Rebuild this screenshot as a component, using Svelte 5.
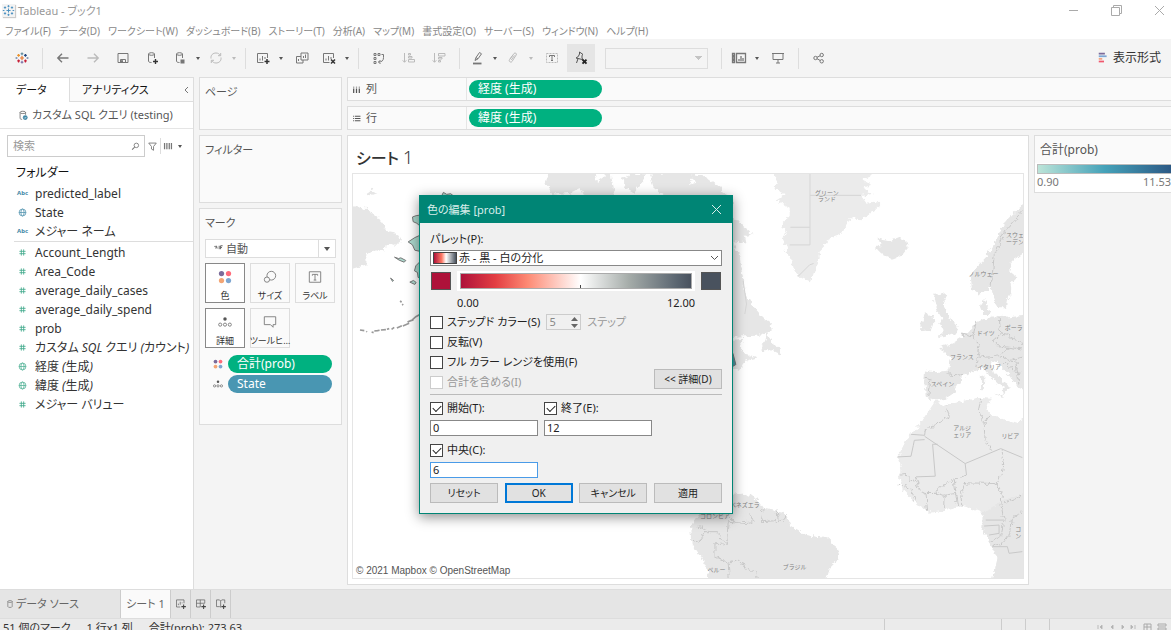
<script lang="ts">
  type Field = { icon: string; name: string; italic?: boolean };
  type Tool = { icon: string; label: string; caret?: boolean; off?: boolean; active?: boolean };

  const menus = ['ファイル(F)', 'データ(D)', 'ワークシート(W)', 'ダッシュボード(B)', 'ストーリー(T)', '分析(A)', 'マップ(M)', '書式設定(O)', 'サーバー(S)', 'ウィンドウ(N)', 'ヘルプ(H)'];

  const dimensions: Field[] = [
    { icon: 'abc', name: 'predicted_label' },
    { icon: 'globe', name: 'State' },
    { icon: 'abc', name: 'メジャー ネーム' },
  ];

  const measures: Field[] = [
    { icon: 'hash', name: 'Account_Length' },
    { icon: 'hash', name: 'Area_Code' },
    { icon: 'hash', name: 'average_daily_cases' },
    { icon: 'hash', name: 'average_daily_spend' },
    { icon: 'hash', name: 'prob' },
    { icon: 'hash', name: 'カスタム SQL クエリ (カウント)', italic: true },
    { icon: 'globe', name: '経度 (生成)', italic: true },
    { icon: 'globe', name: '緯度 (生成)', italic: true },
    { icon: 'hash', name: 'メジャー バリュー' },
  ];

  const toolGroups: Tool[][] = [
    [{ icon: 'logo', label: 'スタート' }],
    [
      { icon: 'back', label: '元に戻す' },
      { icon: 'forward', label: 'やり直し', off: true },
      { icon: 'save', label: '保存' },
      { icon: 'addData', label: '新しいデータ ソース' },
      { icon: 'pause', label: '自動更新の一時停止', caret: true },
      { icon: 'refresh', label: '更新の実行', caret: true, off: true },
    ],
    [
      { icon: 'newSheet', label: '新しいワークシート', caret: true },
      { icon: 'duplicate', label: '複製' },
      { icon: 'clear', label: 'クリア', caret: true },
    ],
    [
      { icon: 'swap', label: '行と列の交換' },
      { icon: 'sortAsc', label: '昇順で並べ替え', off: true },
      { icon: 'sortDesc', label: '降順で並べ替え', off: true },
    ],
    [
      { icon: 'pen', label: '強調表示', caret: true },
      { icon: 'clip', label: 'グループ化', caret: true, off: true },
      { icon: 'text', label: 'マーク ラベルの表示', off: true },
      { icon: 'pin', label: '軸の修正', active: true },
    ],
  ];

  // inner markup of the 16x16 icons
  const icons: Record<string, string> = {
    logo: `<g stroke-width="1.500" transform="translate(1.600 1.600) scale(.8)"><path stroke="#e8762d" d="M8 5.500v5M5.500 8h5"/><path stroke="#5b879b" d="M8 1v3.500M6.300 2.700h3.400"/><path stroke="#c72037" d="M3.700 10v3.500M2 11.700h3.500M12.300 10v3.500M10.600 11.700H14"/><path stroke="#1f447e" d="M12.300 3v3.500M10.600 4.700H14M13.800 8h2.200M0 8h2.200"/><path stroke="#eb9129" d="M3.700 3v3.500M2 4.700h3.500"/><path stroke="#7a6fa6" d="M8 11.500V15M6.300 13.300h3.400"/></g>`,
    app: `<g stroke="#4a90c0" stroke-width="1.2"><path d="M8 5.500v5M5.500 8h5M8 1.500v2.500M6.700 2.700h2.600M8 12v2.500M6.700 13.300h2.600M3.700 3v2.800M2.300 4.400h2.800M12.300 3v2.800M10.900 4.400h2.800M3.700 10.200V13M2.300 11.600h2.800M12.300 10.200V13M10.900 11.600h2.800M1 8h2M13 8h2"/></g>`,
    back: `<path d="M13.500 8H3M7 3.800 2.800 8 7 12.200" stroke-width="1.400"/>`,
    forward: `<path d="M2.500 8H13M9 3.800 13.200 8 9 12.200" stroke-width="1.400"/>`,
    save: `<path d="M3 3.500h10v9H3zM5.500 12.500v-3h5v3"/><path d="M6.500 10.500h1v2h-1z" fill="currentColor"/>`,
    addData: `<ellipse cx="6.500" cy="4" rx="3" ry="1.300"/><path d="M3.500 4v7c0 1 1 1.500 3 1.500M9.500 4v4"/><path d="M10.500 9v5M8 11.500h5" stroke="#333" stroke-width="1.400"/>`,
    pause: `<ellipse cx="7.500" cy="4" rx="3" ry="1.300"/><path d="M4.500 4v7c0 1 1 1.500 3 1.500M10.500 4v4"/><path d="M8.500 9.500h4v4h-4z" fill="currentColor" stroke="none"/>`,
    refresh: `<path d="M3 8.500C2.500 5 5 3 8 3c2 0 3.500 1 4.300 2.500M13 7.500c.5 3.500-2 5.500-5 5.500-2 0-3.500-1-4.300-2.500M12.700 3v2.700H10M3.300 13v-2.700H6"/>`,
    newSheet: `<path d="M12.500 8V3.500h-10v9h6M5 10.500v-2M7.500 10.500V6M10 9V7"/><path d="M12 9v5M9.500 11.500h5" stroke="#333" stroke-width="1.500"/>`,
    duplicate: `<path d="M7 3h7v7H7zM7 6.500H2.500V13H9v-3M9.500 8V6M11.500 8V4.500M4.500 11V9"/>`,
    clear: `<path d="M12.500 8V3.500h-10v9h6M5 10.500v-2M7.500 10.500V6M10 9V7"/><path d="m10 9.500 4 4M14 9.500l-4 4" stroke="#333" stroke-width="1.500"/>`,
    swap: `<path d="M3 3.500h2v2H3zM7 3.500h2v2H7zM3 7.500h2v2H3zM3 11.500h2v2H3z"/><path d="M10.500 4.500h2v3M12.500 7.500c0 3-1.500 4.500-5 4.500M9.500 10l-2 2 2 2"/>`,
    sortAsc: `<path d="M3.500 3v9M1.700 10.300l1.800 2 1.800-2M7.500 3.500h2v1.500h-2zM7.500 6.500h3.500v1.500H7.500zM7.500 9.500h6v2.500h-6z"/>`,
    sortDesc: `<path d="M3.500 3v9M1.700 10.300l1.800 2 1.800-2M7.500 3.500h6.500V6H7.500zM7.500 7.500H11v1.500H7.500zM7.500 10.500h2V12h-2z"/>`,
    pen: `<path d="m6 10.500 1-3 3.500-5 2 1.300-3.500 5zM7 7.500l2 1.300"/><path d="M4 13.500h8.500" stroke-width="1.800"/>`,
    clip: `<path d="m5 9 4-5.500c1-1.300 3.200 0 2.200 1.500L7 11.500c-1 1.500-3.700 0-2.500-1.800L8 5M9.500 5.500 6.300 10"/>`,
    text: `<path d="M2.500 3.500h11v9h-11z" stroke-dasharray="2 1"/><path d="M5.500 7V5.500h5V7M8 5.500v5M7 10.500h2" stroke="#777"/>`,
    pin: `<path d="m6.500 2 3.500 2.500-1 .8V8l1 1.700L3 8l2.300-1.500L6.500 4zM5 8.700 3.500 13"/><path d="m9.500 9.700 4 4M13.500 9.700l-4 4" stroke="#222" stroke-width="1.900"/>`,
    cards: `<path d="M1.500 3.500h2v2h-2zM1.500 7h2v2h-2zM1.500 10.500h2v2h-2zM5.500 3.500h9v9h-9zM8 11V9M10 11V6M12 11V8" stroke-width="1.300"/>`,
    present: `<path d="M2 3.500h12M3 3.500v6h10v-6M8 9.500V13M6 13h4"/>`,
    share: `<circle cx="4.500" cy="8" r="1.700"/><circle cx="10.700" cy="5" r="1.700"/><circle cx="10.700" cy="11.300" r="1.700"/><path d="m6 7.300 3-1.500M6 8.700l3 1.700"/>`,
    showMe: `<g stroke-width="2"><path stroke="#7b6b9a" d="M2 3h7"/><path stroke="#7ea6d4" d="M2 6h9"/><path stroke="#f3a582" d="M2 9h4"/><path stroke="#f0586e" d="M2 12h6"/></g>`,
    globe: `<circle cx="8" cy="8" r="5"/><ellipse cx="8" cy="8" rx="2.300" ry="5"/><path d="M3 8h10"/>`,
    hash: `<path d="M6.300 3.500v9M9.700 3.500v9M3.500 6.300h9M3.500 9.700h9" stroke-width="1.200"/>`,
    dataSource: `<ellipse cx="7" cy="3.500" rx="4" ry="1.700"/><path d="M3 3.500V12c0 1 1 1.500 3 1.700M11 3.500V7"/><circle cx="10.500" cy="11" r="3.500" fill="#3f87a6" stroke="none"/><path d="m9 11 1.200 1.200L12.200 10" stroke="#fff"/>`,
    database: `<ellipse cx="8" cy="4" rx="3.500" ry="1.500"/><path d="M4.500 4v8c0 2 7 2 7 0V4"/>`,
    search: `<circle cx="9.500" cy="6" r="4" stroke-width="1.500"/><path d="m6.500 9-4.500 4.500" stroke-width="1.800"/>`,
    filter: `<path d="M2.500 3h11L9.500 8v5.500l-3-1.800V8z" stroke-width="1.300"/>`,
    columns: `<path d="M3 3v1.500M3 6v8M8 3v1.500M8 6v8M13 3v1.500M13 6v8" stroke-width="2.200"/>`,
    rows: `<path d="M2 4h1.500M5 4h10M2 8h1.500M5 8h10M2 12h1.500M5 12h10" stroke-width="2"/>`,
    view: `<path d="M2.500 3v10M6.200 3v10M10 3v10M13.500 3v10" stroke-width="2"/>`,
    colors: `<g stroke="none"><circle cx="4" cy="4" r="3" fill="#7b6b9a"/><circle cx="12" cy="4" r="3" fill="#ff6b7a"/><circle cx="4" cy="12" r="3" fill="#f3a574"/><circle cx="12" cy="12" r="3" fill="#7ea6d0"/></g>`,
    size: `<circle cx="9.500" cy="6.500" r="5"/><circle cx="4.500" cy="11" r="3" fill="#fafafa"/>`,
    label: `<path d="M1.500 2h13v12h-13z"/><path d="M5 6.500V5h6v1.500M8 5v6.500M6.500 11.500h3"/>`,
    detail: `<circle cx="8" cy="4.500" r="2" fill="#555" stroke="none"/><circle cx="2.500" cy="11" r="1.800"/><circle cx="8" cy="11" r="1.800"/><circle cx="13.500" cy="11" r="1.800"/>`,
    tooltip: `<path d="M1.500 2h13v9h-3v3l-3-3h-7z"/>`,
    auto: `<path d="M2 5c2-1 3 1 2 3M5 4l1 4M9 4v5M11 4h3M11 6.500h2M11 4v5" stroke-width="1.300"/>`,
    tabSheet: `<path d="M12 7V2.500H2V12h5M4.500 9.500V7.500M7 9V5M9.500 7V6"/><path d="M11.500 8.500v6M8.500 11.500h6" stroke="#444" stroke-width="1.400"/>`,
    tabDashboard: `<path d="M13 7V2.500H2V12h5M2 7h11M7 2.500V12"/><path d="M11.500 8.500v6M8.500 11.500h6" stroke="#444" stroke-width="1.400"/>`,
    tabStory: `<path d="M13 7V2.500H9L7.500 4 6 2.500H2v9h4l1.500 1M7.500 4v8"/><path d="M11.500 8.500v6M8.500 11.500h6" stroke="#444" stroke-width="1.400"/>`,
  };

  const markCards = [
    { icon: 'colors', label: '色', used: true },
    { icon: 'size', label: 'サイズ', used: false },
    { icon: 'label', label: 'ラベル', used: false },
    { icon: 'detail', label: '詳細', used: true },
    { icon: 'tooltip', label: 'ツールヒ…', used: false },
  ];

  const mapLabels: [number, number, string][] = [
    [412, 101, 'グリーン'], [412, 121, 'ランド'], [978, 229, 'スウェ'], [978, 249, 'ーデン'],
    [883, 347, 'ノルウェー'], [890, 524, 'ドイツ'], [974, 507, 'ポーラ'], [818, 595, 'フランス'],
    [900, 626, 'イタリア'], [760, 676, 'スペイン'], [819, 808, 'アルジ'], [819, 831, 'ェリア'],
    [964, 834, 'リビア'], [165, 1042, 'ベネズエラ'], [75, 1074, 'コロンビア'],
    [315, 1226, 'ブラジル'], [80, 1235, 'ペルー'], [988, 1114, 'コ'], [988, 1135, 'ン'],
  ];

  let stepped = $state(false);
  let reversed = $state(false);
  let fullRange = $state(false);
  let useStart = $state(true);
  let useEnd = $state(true);
  let useCenter = $state(true);
  let start = $state('0');
  let end = $state('12');
  let center = $state('6');
</script>

{#snippet icon(name: string, size = 16)}
  <svg class="icon" width={size} height={size} viewBox="0 0 16 16" fill="none" stroke="currentColor" aria-hidden="true">
    {@html icons[name]}
  </svg>
{/snippet}

{#snippet tool(t: Tool)}
  <button class="tool" class:has-caret={t.caret} class:off={t.off} class:active={t.active} aria-label={t.label}>
    <span class="tool-icon">{@render icon(t.icon)}</span>
    {#if t.caret}<span class="caret"></span>{/if}
  </button>
{/snippet}

{#snippet field(f: Field)}
  <li class="field" class:italic={f.italic}>
    <span class="field-icon">
      {#if f.icon === 'abc'}<b>Abc</b>{:else}{@render icon(f.icon, 11)}{/if}
    </span>
    {f.name}
  </li>
{/snippet}

<div class="app">
  <header class="titlebar">
    <span class="app-icon">{@render icon('app', 13)}</span>
    <span class="app-title">Tableau - ブック1</span>
    <div class="window-buttons">
      <button aria-label="最小化"><svg width="11" height="11" viewBox="0 0 11 11"><path d="M1 5.500h9" /></svg></button>
      <button aria-label="元のサイズに戻す"><svg width="11" height="11" viewBox="0 0 11 11"><path d="M.5 2.500h8v8h-8zM2.500 2.500v-2h8v8h-2" /></svg></button>
      <button aria-label="閉じる"><svg width="11" height="11" viewBox="0 0 11 11"><path d="m1 1 9 9M10 1l-9 9" /></svg></button>
    </div>
  </header>

  <nav class="menubar">
    {#each menus as m}
      <button>{m}</button>
    {/each}
  </nav>

  <div class="toolbar">
    {#each toolGroups as group, i}
      {#if i > 0}<span class="sep"></span>{/if}
      {#each group as t}{@render tool(t)}{/each}
    {/each}
    <select class="fit" aria-label="フィット"><option></option></select>
    <span class="sep"></span>
    {@render tool({ icon: 'cards', label: 'カードの表示', caret: true })}
    {@render tool({ icon: 'present', label: 'プレゼンテーション モード' })}
    <span class="sep"></span>
    {@render tool({ icon: 'share', label: '共有' })}
    <button class="show-me">{@render icon('showMe', 14)}表示形式</button>
  </div>

  <div class="workspace">
    <aside class="data-pane">
      <div class="pane-tabs">
        <button class="pane-tab selected">データ</button>
        <button class="pane-tab">アナリティクス <svg width="5" height="8" viewBox="0 0 5 8"><path d="M4 1 1 4l3 3" /></svg></button>
      </div>
      <div class="source">{@render icon('dataSource', 11)}カスタム SQL クエリ (testing)</div>
      <div class="search-row">
        <div class="search">
          <input type="text" placeholder="検索" aria-label="検索" />
          {@render icon('search', 9)}
        </div>
        <button aria-label="フィルター">{@render icon('filter', 11)}</button>
        <span class="search-sep"></span>
        <button aria-label="表示">{@render icon('view', 10)}<span class="caret"></span></button>
      </div>
      <div class="folder">フォルダー</div>
      <ul class="fields">
        {#each dimensions as f}{@render field(f)}{/each}
      </ul>
      <ul class="fields measures">
        {#each measures as f}{@render field(f)}{/each}
      </ul>
    </aside>

    <div class="cards">
      <section class="card pages">ページ</section>
      <section class="card filters">フィルター</section>
      <section class="card marks">
        <div>マーク</div>
        <div class="mark-type">
          {@render icon('auto', 11)}
          <select aria-label="マークの種類"><option>自動</option></select>
          <span class="drop"><span class="caret"></span></span>
        </div>
        <div class="mark-buttons">
          {#each markCards as c}
            <button class:used={c.used}>{@render icon(c.icon, 14)}<span>{c.label}</span></button>
          {/each}
        </div>
        <div class="mark-pill">{@render icon('colors', 10)}<span class="pill">合計(prob)</span></div>
        <div class="mark-pill">{@render icon('detail', 10)}<span class="pill blue">State</span></div>
      </section>
    </div>

    <main class="view">
      <div class="shelf">
        <div class="shelf-label">{@render icon('columns', 9)}列</div>
        <span class="pill">経度 (生成)</span>
      </div>
      <div class="shelf">
        <div class="shelf-label">{@render icon('rows', 9)}行</div>
        <span class="pill">緯度 (生成)</span>
      </div>
      <div class="view-row">
        <section class="sheet">
          <h1>シート <span>1</span></h1>
          <div class="map">
            <svg viewBox="352 172 672 407" preserveAspectRatio="xMidYMid slice" role="img" aria-label="地図">
              <defs>
                <filter id="coast" x="-5%" y="-5%" width="110%" height="110%">
                  <feTurbulence type="fractalNoise" baseFrequency=".07" numOctaves="3" seed="4" />
                  <feDisplacementMap in="SourceGraphic" scale="20" xChannelSelector="R" yChannelSelector="G" />
                </filter>
              </defs>
              <g transform="translate(340 160) scale(.33333)">
                <g filter="url(#coast)">
                  <path class="land" d="M30 133 75 145 110 170 140 210 165 215 183 240 165 255 135 250 130 270 105 262 75 285 78 310 30 325ZM72 100 90 86 110 96 85 106Z" />
                  <path class="land" d="M625 30H765L770 60 810 30 825 110H735L720 80 690 95 640 100 615 70ZM845 50 880 38 920 40 900 70 880 95 855 80ZM930 38 1010 30 1060 38 1050 70 1090 60 1110 80 1140 90 1180 110V140H960L970 100 940 80Z" />
                </g>
                <path class="state" d="M300 110 308 94 318 100 330 98 345 110ZM240 162 226 164 215 168 217 182 228 187 240 197ZM240 222 222 230 202 243 215 252 222 268 240 272ZM161 289 173 293 180 291 195 299 190 304 175 298ZM240 300 225 315 221 330 230 335 232 350 240 352ZM207 364 218 359 226 365 222 371ZM149 352 158 359 155 362Z" />
                <path class="isles" d="M57 508 70 510 M76 512 78 514 M92 514 98 516 M100 511 110 510 116 509 M120 508 135 507 M138 506 145 504 M152 506 160 500 M168 502 183 495 M186 496 205 488 M200 484 210 480 218 478 M212 480 225 468 240 460M178 420l4 5M184 430l3 3" />
              </g>
              <g transform="translate(690 160) scale(.33333)">
                <g filter="url(#coast)">
                  <path class="land light" d="M248 30 262 62 255 85 288 100 260 118 300 140 300 165 275 190 288 215 278 235 292 262 285 275 303 290 308 320 325 345 362 362 372 335 385 300 390 270 410 250 420 232 450 222 470 195 480 172 520 175 545 155 572 135 572 120 530 125 515 105 550 98 520 80 545 70 515 55 575 30Z" />
                  <path class="land" d="M558 232 580 250 560 262 578 280 608 294 640 282 655 262 650 235 630 228 600 240 580 238ZM0 38 40 45 90 80 115 115 130 165 150 190 188 220 165 225 170 248 100 235ZM100 230 128 240 150 290 160 360 165 395 185 430 215 465 245 490 240 515 215 525 100 530ZM100 540 160 535 150 560 165 580 205 590 170 600 150 628 100 615ZM232 512 245 545 270 560 272 582 245 570 215 568 225 545Z" />
                  <path class="land" d="M1010 125 980 150 950 180 930 220 915 250 890 290 860 320 845 345 848 385 870 402 895 390 905 375 915 410 925 440 950 440 955 415 968 400 965 370 985 350 960 330 970 300 1010 270ZM880 415 897 420 895 445 905 460 880 460 872 440ZM740 402 765 395 770 420 765 440 785 475 805 500 800 518 745 530 765 510 750 490 760 470 745 450 735 420ZM697 485 710 458 730 465 732 490 725 508 695 512Z" />
                  <path class="land" d="M1010 465 960 470 930 462 890 475 862 485 845 505 820 530 790 548 750 560 765 575 785 590 780 630 735 635 707 630 705 665 710 708 740 720 770 715 790 700 800 680 820 655 826 640 860 630 880 620 895 640 920 660 940 680 945 705 915 700 940 713 955 690 965 680 945 665 915 635 905 610 925 600 940 625 965 650 985 680 1010 690ZM875 642 886 645 884 685 876 686Z" />
                  <path class="land light" d="M738 722 770 735 820 722 870 712 905 715 895 745 905 760 950 780 985 790 1010 765V1265H910L925 1200 905 1150 880 1110 885 1060 850 1045 820 1038 770 1052 720 1058 680 1030 640 990 628 950 635 920 625 890 650 840 700 780Z" />
                  <path class="land" d="M0 1100 30 1060 70 1010 160 1000 200 1015 220 1045 290 1060 305 1100 350 1125 410 1135 445 1165 450 1195 420 1225 410 1265H60L40 1200 5 1150Z" />
                  <path class="land" d="M880 1060 940 1020 1010 1000V1265H910L925 1200 905 1150 880 1110Z" />
                  <path class="border" d="M1000 150 965 190 945 215 930 255 915 285 910 340 905 385M862 485 850 530 870 555 865 585 895 590 935 585 960 560 1000 565M930 470 935 520 960 525 1000 548M910 540 935 520M910 540 925 555 960 560M820 520 850 530M775 640 825 645M705 650 725 655 718 710M865 585 860 620M935 585 960 600 1000 590M945 605 985 640 1000 635M980 600 990 670" />
                  <path class="border" d="M110 1060 140 1090 190 1085 180 1060M220 1045 215 1085 285 1080 290 1060M262 1048 265 1080M110 1150 115 1085 140 1090M5 1140 25 1150 45 1115 80 1115 110 1150 75 1155 75 1190 115 1210 150 1200 165 1225 200 1240 202 1258M20 1098 55 1110M115 1210 118 1258" />
                  <path class="border" d="M770 735 780 770 708 810M875 715 868 750 885 790 888 840 908 868M905 760 885 790M680 950 670 965 650 940 630 942M832 945 790 958 745 985 740 1000M935 868 945 900 940 940 920 970 830 968 815 1000 818 1035M740 1000 765 1005 800 1000 795 958M680 950 690 990 710 1000 740 1000M710 1000 715 1055M765 1005 763 1050M800 1000 805 1040M628 975 665 985 680 1030M920 970 940 1005 935 1030 945 1080M945 1030 1000 1005M945 1080 935 1130 905 1145M1000 1055 970 1075 965 1120 940 1150 910 1158" />
                </g>
                <path class="border" d="M708 810 706 825 665 822M706 838 675 840 672 855 665 888 625 890M706 828 828 910 935 865 1000 892M730 852H745M730 852 738 948 680 950M828 910 832 945M945 1080H890M885 1098 930 1095 930 1120 900 1125M910 1160 955 1160 960 1180 1000 1175" />
                <path class="border faint" d="M361 38V252H300M302 199H361M361 103H515M325 347 360 312 372 308M160 360 170 430 165 460" />
                <path class="state maine" d="M110 570 129 578 138 612 128 618Z" />
                {#each mapLabels as [x, y, text]}
                  <text {x} {y}>{text}</text>
                {/each}
              </g>
            </svg>
            <div class="attribution">© 2021 Mapbox © OpenStreetMap</div>
          </div>
        </section>
        <section class="legend">
          <div class="legend-title">合計(prob)</div>
          <div class="legend-body">
            <div class="legend-ramp"></div>
            <div class="legend-range"><span>0.90</span><span>11.53</span></div>
          </div>
        </section>
      </div>
    </main>
  </div>

  <footer class="sheet-tabs">
    <button class="source-tab">{@render icon('database', 10)}データ ソース</button>
    <button class="sheet-tab">シート 1</button>
    <button class="new-tab" aria-label="新しいワークシート">{@render icon('tabSheet', 12)}</button>
    <button class="new-tab" aria-label="新しいダッシュボード">{@render icon('tabDashboard', 12)}</button>
    <button class="new-tab" aria-label="新しいストーリー">{@render icon('tabStory', 12)}</button>
  </footer>
  <div class="status">
    <span>51 個のマーク</span>
    <span>1 行x1 列</span>
    <span>合計(prob): 273.63</span>
    <div class="status-right">
      <i class="wide"></i><i></i><i></i><i class="mid"></i>
      <svg width="74" height="10" viewBox="0 0 74 10">
        <path class="solid" d="M1 3v4M5 3 3 5l2 2zM16 3l-2 2 2 2zM25 3l2 2-2 2zM34 3l2 2-2 2zM38 3v4" />
        <path d="M47 2h7v7h-7zM50 2v7M47 5h7M61 2h8v2h-8zM61 6h8v2h-8z" />
      </svg>
    </div>
  </div>

  <div class="dialog" role="dialog" aria-labelledby="dialog-title">
    <div class="dialog-head">
      <span id="dialog-title">色の編集 [prob]</span>
      <button aria-label="閉じる"><svg width="11" height="11" viewBox="0 0 11 11"><path d="m1 1 9 9M10 1l-9 9" /></svg></button>
    </div>
    <div class="dialog-body">
      <label for="palette">パレット(P):</label>
      <div class="palette">
        <span class="thumb"></span>
        <select id="palette"><option>赤 - 黒 - 白の分化</option></select>
        <svg width="9" height="6" viewBox="0 0 9 6"><path d="m1 1 3.500 3.500L8 1" /></svg>
      </div>
      <div class="ramp-row">
        <button class="swatch red" aria-label="開始色"></button>
        <div class="ramp-frame"><div class="ramp"></div></div>
        <button class="swatch slate" aria-label="終了色"></button>
      </div>
      <div class="ramp-values"><span>0.00</span><span>12.00</span></div>

      <div class="options">
        <div class="option-list">
          <div class="option">
            <label><input type="checkbox" bind:checked={stepped} />ステップド カラー(S)</label>
            <div class="stepper">
              <input type="text" value="5" disabled aria-label="ステップ数" />
              <svg width="7" height="11" viewBox="0 0 7 11"><path d="m0 4 3.500-4L7 4zM0 7l3.500 4L7 7z" /></svg>
            </div>
            <span class="muted">ステップ</span>
          </div>
          <div class="option"><label><input type="checkbox" bind:checked={reversed} />反転(V)</label></div>
          <div class="option"><label><input type="checkbox" bind:checked={fullRange} />フル カラー レンジを使用(F)</label></div>
          <div class="option"><label class="muted"><input type="checkbox" disabled />合計を含める(I)</label></div>
        </div>
        <button class="btn">&lt;&lt; 詳細(D)</button>
      </div>

      <div class="bounds">
        <div class="bound">
          <label><input type="checkbox" bind:checked={useStart} />開始(T):</label>
          <input type="text" bind:value={start} aria-label="開始" />
        </div>
        <div class="bound">
          <label><input type="checkbox" bind:checked={useEnd} />終了(E):</label>
          <input type="text" bind:value={end} aria-label="終了" />
        </div>
        <div class="bound">
          <label><input type="checkbox" bind:checked={useCenter} />中央(C):</label>
          <input class="focused" type="text" bind:value={center} aria-label="中央" />
        </div>
      </div>

      <div class="buttons">
        <button class="btn">リセット</button>
        <button class="btn default">OK</button>
        <button class="btn">キャンセル</button>
        <button class="btn">適用</button>
      </div>
    </div>
  </div>
</div>

<style>
  :global(body) {
    overflow: hidden;
  }

  .app {
    position: relative;
    height: 100vh;
    display: flex;
    flex-direction: column;
    overflow: hidden;
    background: #f4f4f4;
    color: #333;
    font-family: 'Noto Sans', 'Noto Sans CJK JP', sans-serif;
    font-size: 12px;
    line-height: 18px;
    font-feature-settings: 'palt';
  }

  .app * {
    box-sizing: border-box;
  }

  button,
  input,
  select {
    font: inherit;
    font-feature-settings: inherit;
    color: inherit;
    background: none;
    border: 0;
    border-radius: 0;
    padding: 0;
    margin: 0;
    appearance: none;
    outline: 0;
  }

  .icon {
    flex: none;
    display: block;
  }

  .caret {
    border: 2px solid transparent;
    border-top: 3px solid #555;
    border-bottom: 0;
  }

  /* window frame */
  .titlebar {
    height: 21px;
    flex: none;
    display: flex;
    align-items: center;
    gap: 3px;
    padding: 0 2px;
    background: #fff;
    color: #999;
    font-size: 11px;
  }

  .app-icon {
    background: #f3f3f3;
    box-shadow: 1px 1px 1px #ccc;
  }

  .window-buttons {
    margin-left: auto;
    display: flex;
    gap: 32px;
    padding-right: 4px;
  }

  .window-buttons button {
    display: flex;
  }

  .window-buttons svg {
    fill: none;
    stroke: #aaa;
  }

  .menubar {
    height: 18px;
    flex: none;
    display: flex;
    align-items: center;
    gap: 8px;
    padding: 2px 5px 0;
    background: #fff;
    color: #888;
    font-size: 10px;
    white-space: nowrap;
  }

  .toolbar {
    height: 38px;
    flex: none;
    display: flex;
    align-items: center;
    padding: 0 10px 0 7px;
    color: #777;
  }

  .tool {
    width: 30px;
    height: 28px;
    display: flex;
    align-items: center;
    justify-content: center;
    flex: none;
  }

  .tool.has-caret {
    width: 36px;
    justify-content: flex-start;
  }

  .has-caret .tool-icon {
    width: 24px;
    display: flex;
    justify-content: center;
  }

  .has-caret .caret {
    margin-left: 4px;
  }

  .tool.off {
    color: #bbb;
  }

  .tool.off .caret {
    border-top-color: #bbb;
  }

  .tool.active {
    width: 28px;
    background: #e5e5e5;
    color: #555;
  }

  .sep {
    width: 1px;
    height: 21px;
    margin: 0 5px;
    background: #ddd;
    flex: none;
  }

  .fit {
    width: 103px;
    height: 21px;
    margin: 0 8px 0 10px;
    border: 1px solid #ddd;
    background:
      linear-gradient(45deg, transparent 50%, #c4c4c4 50%) no-repeat right 8px center / 4px 4px,
      linear-gradient(-45deg, transparent 50%, #c4c4c4 50%) no-repeat right 4px center / 4px 4px;
  }

  .show-me {
    margin-left: auto;
    display: flex;
    align-items: center;
    gap: 2px;
    color: #333;
  }

  /* data pane */
  .workspace {
    flex: 1;
    min-height: 0;
    display: flex;
    gap: 5px;
    border-bottom: 1px solid #ddd;
  }

  .data-pane {
    width: 194px;
    flex: none;
    background: #fff;
    border: 1px solid #ddd;
    border-width: 1px 1px 0 0;
  }

  .pane-tabs {
    display: flex;
    height: 24px;
    color: #111;
    font-size: 11px;
  }

  .pane-tab {
    flex: 1;
    display: flex;
    align-items: center;
    justify-content: space-between;
    padding: 0 4px 0 12px;
    background: #fafafa;
    border: 1px solid #ddd;
    border-width: 0 0 1px 1px;
  }

  .pane-tab.selected {
    flex: none;
    width: 69px;
    padding-left: 16px;
    background: #fff;
    border: 0;
  }

  .pane-tab svg {
    fill: none;
    stroke: #777;
  }

  .source {
    height: 27px;
    display: flex;
    align-items: center;
    gap: 3px;
    padding-left: 18px;
    border-bottom: 1px solid #e5e5e5;
    color: #555;
    font-size: 11px;
    white-space: nowrap;
  }

  .search-row {
    display: flex;
    align-items: center;
    gap: 2px;
    padding: 6px 7px 5px;
    color: #777;
  }

  .search-row button {
    display: flex;
    align-items: center;
    gap: 5px;
  }

  .search {
    width: 138px;
    height: 22px;
    display: flex;
    align-items: center;
    padding: 0 4px 0 5px;
    border: 1px solid #ccc;
    font-size: 11px;
  }

  .search input {
    flex: 1;
    min-width: 0;
  }

  .search input::placeholder {
    color: #999;
  }

  .search-sep {
    width: 1px;
    height: 16px;
    background: #ddd;
  }

  .folder {
    height: 22px;
    line-height: 22px;
    padding-left: 16px;
    color: #111;
  }

  .fields {
    list-style: none;
    margin: 0;
    padding: 0;
  }

  .measures {
    margin: 0 0 0 14px;
    padding-top: 1px;
    border-top: 1px solid #ddd;
  }

  .field {
    height: 19px;
    line-height: 19px;
    display: flex;
    align-items: center;
    padding-left: 16px;
    white-space: nowrap;
    font-synthesis: none;
    color: #333;
  }

  .measures .field {
    padding-left: 2px;
  }

  .field.italic {
    font-style: italic;
  }

  .field-icon {
    width: 19px;
    padding-left: 1px;
    color: #3f87a6;
    font-size: 6px;
    flex: none;
  }

  .measures .field-icon {
    color: #3fa98a;
  }

  /* cards */
  .cards {
    width: 143px;
    flex: none;
    display: flex;
    flex-direction: column;
    gap: 5px;
  }

  .card {
    padding: 5px;
    background: #fafafa;
    border: 1px solid #ddd;
    color: #555;
    font-size: 11px;
  }

  .pages {
    height: 53px;
  }

  .filters {
    height: 68px;
  }

  .marks {
    height: 217px;
  }

  .mark-type {
    display: flex;
    align-items: center;
    height: 19px;
    margin: 7px 0 5px;
    padding-left: 7px;
    gap: 2px;
    border: 1px solid #ddd;
    background: #fff;
  }

  .mark-type select {
    flex: 1;
  }

  .drop {
    align-self: stretch;
    width: 17px;
    display: flex;
    align-items: center;
    justify-content: center;
    border-left: 1px solid #ddd;
  }

  .drop .caret {
    border-width: 4px 3px 0;
  }

  .mark-buttons {
    display: grid;
    grid-template-columns: repeat(3, 40px);
    gap: 5px;
    margin-bottom: 7px;
  }

  .mark-buttons button {
    height: 40px;
    display: flex;
    flex-direction: column;
    align-items: center;
    padding-top: 6px;
    gap: 5px;
    border: 1px solid #ddd;
    color: #777;
    font-size: 9px;
    line-height: 14px;
    white-space: nowrap;
  }

  .mark-buttons button.used {
    border-color: #888;
    background: #fff;
  }

  .mark-buttons span {
    color: #333;
  }

  .mark-pill {
    display: flex;
    align-items: center;
    gap: 5px;
    padding: 0 4px 0 8px;
    margin-bottom: 2px;
  }

  .pill {
    flex: 1;
    height: 18px;
    line-height: 18px;
    padding: 0 9px;
    border-radius: 9px;
    background: #00b180;
    color: #fff;
    font-size: 12px;
  }

  .pill.blue {
    background: #4996b2;
  }

  /* view */
  .view {
    flex: 1;
    min-width: 0;
    display: flex;
    flex-direction: column;
    gap: 5px;
  }

  .shelf {
    height: 24px;
    flex: none;
    display: flex;
    align-items: center;
    background: #fafafa;
    border: 1px solid #ddd;
    border-right: 0;
  }

  .shelf-label {
    width: 119px;
    align-self: stretch;
    display: flex;
    align-items: center;
    gap: 5px;
    padding-left: 4px;
    border-right: 1px solid #e5e5e5;
    margin-right: 2px;
    font-size: 11px;
    color: #555;
  }

  .shelf .pill {
    flex: none;
    width: 133px;
  }

  .view-row {
    flex: 1;
    min-height: 0;
    display: flex;
    gap: 5px;
    padding-bottom: 4px;
  }

  .sheet {
    flex: 1;
    min-width: 0;
    display: flex;
    flex-direction: column;
    padding: 7px 4px 5px;
    background: #fff;
    border: 1px solid #ddd;
  }

  .sheet h1 {
    margin: 0;
    padding-left: 4px;
    font-size: 16px;
    line-height: 29px;
    font-weight: 500;
  }

  .sheet h1 span {
    font-size: 18px;
    font-weight: 300;
  }

  .map {
    flex: 1;
    min-height: 0;
    position: relative;
    border: 1px solid #e5e5e5;
  }

  .map svg {
    position: absolute;
    width: 100%;
    height: 100%;
  }

  .land {
    fill: #e6e6e6;
  }

  .land.light {
    fill: #ebebeb;
  }

  .border {
    fill: none;
    stroke: #c8c8c8;
    stroke-width: 3;
  }

  .border.faint {
    stroke: #d6d6d6;
  }

  .state {
    fill: #acd8cd;
    stroke: #777;
    stroke-width: 3;
  }

  .state.maine {
    fill: #4a9aa8;
  }

  .isles {
    fill: none;
    stroke: #999;
    stroke-width: 5;
  }

  .map text {
    fill: #808080;
    font-size: 18px;
    text-anchor: middle;
    font-feature-settings: normal;
  }

  .attribution {
    position: absolute;
    left: 3px;
    bottom: 0;
    font-family: 'Liberation Sans', sans-serif;
    font-size: 10px;
    line-height: 15px;
    color: #555;
  }

  .legend {
    width: 137px;
    flex: none;
    align-self: flex-start;
    background: #fafafa;
    border: 1px solid #ddd;
    border-right: 0;
    color: #555;
  }

  .legend-title {
    padding: 5px 5px 4px;
  }

  .legend-body {
    padding: 1px 0 2px 2px;
    background: #fff;
    color: #777;
    font-size: 11px;
  }

  .legend-ramp {
    height: 10px;
    border: 1px solid #bbb;
    border-right: 0;
    background: linear-gradient(90deg, #bce4d8, #45a2b9 50%, #2c5985);
  }

  .legend-range {
    display: flex;
    justify-content: space-between;
    line-height: 16px;
  }

  /* bottom bars */
  .sheet-tabs {
    height: 28px;
    flex: none;
    display: flex;
    background: #e5e5e5;
    color: #666;
    font-size: 11px;
  }

  .sheet-tabs button {
    display: flex;
    align-items: center;
    justify-content: center;
    border-right: 1px solid #ccc;
  }

  .sheet-tabs .source-tab {
    width: 121px;
    justify-content: flex-start;
    gap: 1px;
    padding-left: 5px;
  }

  .sheet-tabs .sheet-tab {
    width: 50px;
    background: #fafafa;
  }

  .sheet-tabs .new-tab {
    width: 20px;
  }

  .status {
    height: 12px;
    flex: none;
    display: flex;
    gap: 16px;
    padding-left: 3px;
    overflow: hidden;
    background: #ebebeb;
    border-top: 1px solid #ddd;
    font-size: 11px;
  }

  .status-right {
    margin-left: auto;
    display: flex;
  }

  .status-right i {
    width: 24px;
    border-left: 1px solid #ccc;
  }

  .status-right .wide {
    width: 117px;
  }

  .status-right .mid {
    width: 42px;
  }

  .status-right svg {
    margin: 3px 0 0 6px;
    fill: none;
    stroke: #aaa;
  }

  .status-right .solid {
    fill: #aaa;
    stroke: #bbb;
  }

  /* colour dialog */
  .dialog {
    position: absolute;
    left: 419px;
    top: 195px;
    width: 314px;
    border: 1px solid #008575;
    background: #f0f0f0;
    box-shadow: 0 3px 12px rgba(0, 0, 0, 0.45);
    font-size: 11px;
    line-height: 16px;
    color: #222;
  }

  .dialog-head {
    height: 27px;
    display: flex;
    align-items: center;
    justify-content: space-between;
    padding: 0 10px 0 7px;
    background: #008575;
    color: #d9eeeb;
  }

  .dialog-head button {
    display: flex;
  }

  .dialog-head svg {
    fill: none;
    stroke: #d9eeeb;
  }

  .dialog-body {
    padding: 8px 10px 10px;
  }

  .dialog-body label {
    display: flex;
    align-items: center;
    gap: 4px;
    white-space: nowrap;
  }

  .palette {
    height: 16px;
    margin-top: 3px;
    display: flex;
    align-items: center;
    padding: 0 2px;
    background: #fff;
    border: 1px solid #888;
  }

  .thumb {
    width: 24px;
    height: 12px;
    border: 1px solid #444;
    background: linear-gradient(90deg, #ae123a, #fc7864 35%, #fff 55%, #49525e);
  }

  .palette select {
    flex: 1;
    height: 14px;
    line-height: 14px;
    padding-left: 2px;
  }

  .palette svg {
    fill: none;
    stroke: #555;
  }

  .ramp-row {
    display: flex;
    align-items: center;
    gap: 6px;
    margin: 5px 1px 4px;
  }

  .swatch {
    width: 20px;
    height: 18px;
    border: 1px solid #555;
  }

  .swatch.red {
    background: #ae123a;
  }

  .swatch.slate {
    background: #49525e;
  }

  .ramp-frame {
    flex: 1;
    padding: 2px 3px;
    background: #fff;
  }

  .ramp {
    height: 16px;
    border: 1px solid #aaa;
    background:
      linear-gradient(#444, #444) no-repeat 52% 100% / 1px 3px,
      linear-gradient(90deg, #ae123a, #e33e43 15%, #fd8a74 29%, #fff 52%, #a5aca9 73%, #5a6570 94%, #49525e);
  }

  .ramp-values {
    display: flex;
    justify-content: space-between;
    padding: 0 27px;
    margin-bottom: 1px;
  }

  .options {
    display: flex;
    justify-content: space-between;
    align-items: flex-end;
    padding-bottom: 2px;
    margin-bottom: 3px;
    border-bottom: 1px solid #bbb;
  }

  .option {
    height: 20px;
    display: flex;
    align-items: center;
    gap: 6px;
    white-space: nowrap;
  }

  .muted {
    color: #999;
  }

  input[type='checkbox'] {
    width: 13px;
    height: 13px;
    flex: none;
    background: #fff;
    border: 1px solid #444;
    position: relative;
  }

  input[type='checkbox']:disabled {
    border-color: #ccc;
  }

  input[type='checkbox']:checked::after {
    content: '';
    position: absolute;
    left: 2px;
    top: 2px;
    width: 7px;
    height: 4px;
    border: 1px solid #222;
    border-width: 0 0 1px 1px;
    transform: rotate(-45deg);
  }

  .stepper {
    width: 35px;
    height: 16px;
    display: flex;
    align-items: center;
    padding: 0 2px;
    border: 1px solid #ccc;
    color: #888;
  }

  .stepper input {
    flex: 1;
    min-width: 0;
  }

  .stepper svg {
    fill: #666;
  }

  .options .btn {
    margin-bottom: 3px;
  }

  .bounds {
    display: grid;
    grid-template-columns: 108px 108px;
    gap: 4px 6px;
  }

  .bound label {
    height: 20px;
    margin-bottom: 2px;
  }

  .bound input[type='text'] {
    display: block;
    width: 100%;
    height: 16px;
    padding: 0 2px;
    background: #fff;
    border: 1px solid #888;
  }

  .bound input.focused {
    border-color: #4a9be8;
  }

  .buttons {
    display: flex;
    justify-content: space-between;
    margin-top: 5px;
  }

  .btn {
    width: 68px;
    height: 20px;
    background: #e1e1e1;
    border: 1px solid #bbb;
    font-size: 10px;
    line-height: 16px;
  }

  .btn.default {
    border: 2px solid #0078d7;
  }
</style>
